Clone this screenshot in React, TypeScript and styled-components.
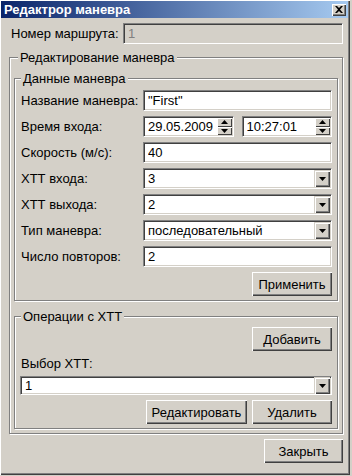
import React from 'react';
import styled, { createGlobalStyle } from 'styled-components';

const face = '#d4d0c8';

const GlobalStyle = createGlobalStyle`
  html, body {
    margin: 0;
    padding: 0;
    background: ${face};
  }
  body {
    font-family: "Liberation Sans", Arial, sans-serif;
    font-size: 13px;
    color: #000;
  }
  * {
    box-sizing: border-box;
  }
`;

const Window = styled.div`
  width: 350px;
  height: 475px;
  background: ${face};
  display: flex;
  flex-direction: column;
  box-shadow: inset 1px 1px 0 #fff, inset -1px -1px 0 #404040, inset -2px -2px 0 #808080;
`;

const TitleBar = styled.div`
  height: 17px;
  margin: 1px 2px 0 1px;
  padding: 0 2px 0 3px;
  display: flex;
  align-items: center;
  justify-content: space-between;
  background: linear-gradient(to right, #0a246a, #a6caf0);
  color: #fff;
  font-weight: bold;
  font-size: 13px;
`;

const CaptionButton = styled.div`
  width: 14px;
  height: 12px;
  background: ${face};
  display: flex;
  align-items: center;
  justify-content: center;
  box-shadow: inset 1px 1px 0 #fff, inset -1px -1px 0 #404040, inset -2px -2px 0 #808080;
`;

const Body = styled.div`
  flex: 1;
  display: flex;
  flex-direction: column;
  padding: 5px 7px 0 9px;
`;

const RouteRow = styled.div`
  display: flex;
  align-items: center;
  height: 20px;
`;

const Label = styled.span<{ $w?: number }>`
  display: flex;
  align-items: center;
  white-space: nowrap;
  ${(p) => (p.$w ? `width: ${p.$w}px; flex: none; padding-left: 2px;` : '')}
`;

const Field = styled.div<{ $disabled?: boolean }>`
  flex: 1;
  min-width: 0;
  height: 21px;
  display: flex;
  align-items: center;
  padding: 0 2px 0 4px;
  background: ${(p) => (p.$disabled ? face : '#fff')};
  color: ${(p) => (p.$disabled ? '#808080' : '#000')};
  border: 1px solid;
  border-color: #808080 #fff #fff #808080;
  box-shadow: inset 1px 1px 0 #404040, inset -1px -1px 0 ${face};
  white-space: nowrap;
`;

const FieldText = styled.span`
  flex: 1;
  overflow: hidden;
`;

const Group = styled.fieldset<{ $pad: string }>`
  margin: 0;
  min-width: 0;
  padding: ${(p) => p.$pad};
  border: 1px solid #808080;
  box-shadow: inset 1px 1px 0 #fff, 1px 1px 0 #fff;
  display: flex;
  flex-direction: column;
`;

const Legend = styled.legend<{ $ml: number }>`
  margin-left: ${(p) => p.$ml}px;
  padding: 0 2px;
  line-height: 15px;
  background: ${face};
`;

const FormGrid = styled.div`
  display: grid;
  grid-template-columns: 122px 1fr;
  row-gap: 5px;
`;

const Pair = styled.div`
  display: flex;
  gap: 8px;
  min-width: 0;
`;

const DropButton = styled.div`
  width: 16px;
  height: 17px;
  flex: none;
  margin-right: -1px;
  background: ${face};
  display: flex;
  align-items: center;
  justify-content: center;
  box-shadow: inset 1px 1px 0 ${face}, inset 2px 2px 0 #fff, inset -1px -1px 0 #404040, inset -2px -2px 0 #808080;
`;

const Spin = styled.div`
  width: 15px;
  height: 17px;
  flex: none;
  margin-right: -1px;
  display: flex;
  flex-direction: column;
`;

const SpinHalf = styled.div`
  flex: 1;
  background: ${face};
  display: flex;
  align-items: center;
  justify-content: center;
  box-shadow: inset 1px 1px 0 #fff, inset -1px -1px 0 #404040;
`;

const ButtonRow = styled.div<{ $mt: number }>`
  display: flex;
  justify-content: flex-end;
  gap: 5px;
  margin-top: ${(p) => p.$mt}px;
`;

const Button = styled.div<{ $w: number }>`
  width: ${(p) => p.$w}px;
  height: 24px;
  display: flex;
  align-items: center;
  justify-content: center;
  background: ${face};
  box-shadow: inset 1px 1px 0 #fff, inset -1px -1px 0 #404040, inset -2px -2px 0 #808080;
`;

const Stack = styled.div<{ $gap: number }>`
  display: flex;
  flex-direction: column;
  gap: ${(p) => p.$gap}px;
`;

const Footer = styled.div`
  display: flex;
  justify-content: flex-end;
  margin-top: 5px;
`;

const Tri = ({ up }: { up?: boolean }) => (
  <svg width="7" height="4" viewBox="0 0 7 4">
    <path d={up ? 'M3.5 0 L7 4 L0 4 Z' : 'M0 0 L7 0 L3.5 4 Z'} fill="#000" />
  </svg>
);

const Combo = ({ value }: { value: string }) => (
  <Field>
    <FieldText>{value}</FieldText>
    <DropButton>
      <Tri />
    </DropButton>
  </Field>
);

const Spinner = ({ value }: { value: string }) => (
  <Field>
    <FieldText>{value}</FieldText>
    <Spin>
      <SpinHalf>
        <Tri up />
      </SpinHalf>
      <SpinHalf>
        <Tri />
      </SpinHalf>
    </Spin>
  </Field>
);

export default function App() {
  return (
    <>
      <GlobalStyle />
      <Window>
        <TitleBar>
          <span>Редактрор маневра</span>
          <CaptionButton>
            <svg width="8" height="7" viewBox="0 0 8 7">
              <path d="M0 0h2l2 2 2-2h2L5 3.5 8 7H6L4 5 2 7H0l3-3.5z" fill="#000" />
            </svg>
          </CaptionButton>
        </TitleBar>
        <Body>
          <RouteRow>
            <Label $w={114}>Номер маршрута:</Label>
            <Field $disabled>
              <FieldText>1</FieldText>
            </Field>
          </RouteRow>
          <Group $pad="6px 4px 4px 4px" style={{ marginTop: 7 }}>
            <Legend $ml={4}>Редактирование маневра</Legend>
            <Stack $gap={8}>
              <Group $pad="4px 5px 4px 6px">
                <Legend $ml={0}>Данные маневра</Legend>
                <FormGrid>
                  <Label>Название маневра:</Label>
                  <Field>
                    <FieldText>"First"</FieldText>
                  </Field>
                  <Label>Время входа:</Label>
                  <Pair>
                    <Spinner value="29.05.2009" />
                    <Spinner value="10:27:01" />
                  </Pair>
                  <Label>Скорость (м/с):</Label>
                  <Field>
                    <FieldText>40</FieldText>
                  </Field>
                  <Label>ХТТ входа:</Label>
                  <Combo value="3" />
                  <Label>ХТТ выхода:</Label>
                  <Combo value="2" />
                  <Label>Тип маневра:</Label>
                  <Combo value="последовательный" />
                  <Label>Число повторов:</Label>
                  <Field>
                    <FieldText>2</FieldText>
                  </Field>
                </FormGrid>
                <ButtonRow $mt={5}>
                  <Button $w={80}>Применить</Button>
                </ButtonRow>
              </Group>
              <Group $pad="3px 5px 4px 5px">
                <Legend $ml={1}>Операции с ХТТ</Legend>
                <ButtonRow $mt={0}>
                  <Button $w={80}>Добавить</Button>
                </ButtonRow>
                <Label style={{ marginTop: 5, marginLeft: 1, height: 15 }}>Выбор ХТТ:</Label>
                <Stack $gap={5} style={{ marginTop: 5 }}>
                  <Combo value="1" />
                  <ButtonRow $mt={0}>
                    <Button $w={101}>Редактировать</Button>
                    <Button $w={80}>Удалить</Button>
                  </ButtonRow>
                </Stack>
              </Group>
            </Stack>
          </Group>
          <Footer>
            <Button $w={79}>Закрыть</Button>
          </Footer>
        </Body>
      </Window>
    </>
  );
}
